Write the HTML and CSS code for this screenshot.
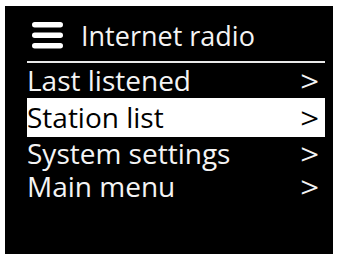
FILE: index.html
```html
<!DOCTYPE html>
<html>
<head>
<meta charset="utf-8">
<link rel="stylesheet" href="styles.css">
</head>
<body>
<div class="screen">
  <div class="header">
    <svg class="burger" width="32" height="28" viewBox="0 0 32 28">
      <rect x="0" y="0" width="31" height="5.5" rx="2.75" fill="#fff"/>
      <rect x="0" y="10.5" width="31" height="5.5" rx="2.75" fill="#fff"/>
      <rect x="0" y="21" width="31" height="5.5" rx="2.75" fill="#fff"/>
    </svg>
    <span class="title">Internet radio</span>
  </div>
  <div class="menu">
    <div class="row r1"><span>Last listened</span><span class="chev">&gt;</span></div>
    <div class="row r2 active"><span>Station list</span><span class="chev">&gt;</span></div>
    <div class="row r3"><span>System settings</span><span class="chev">&gt;</span></div>
    <div class="row r4"><span>Main menu</span><span class="chev">&gt;</span></div>
  </div>
</div>
</body>
</html>
```
FILE: styles.css
```css
html, body {
  margin: 0;
  padding: 0;
  background: #fff;
}
.screen {
  margin: 6px 0 0 5px;
  width: 328px;
  height: 248px;
  background: #000;
  box-sizing: border-box;
  padding: 0 8px 0 22px;
  font-family: "Open Sans", "DejaVu Sans", sans-serif;
  color: #f4f4f4;
}
.header {
  display: flex;
  align-items: center;
  border-bottom: 2px solid #e8e8e8;
  padding-left: 5px;
  box-sizing: border-box;
  height: 57px;
}
.burger {
  display: block;
  margin-top: 5px;
  margin-right: 17px;
}
.title {
  font-size: 27px;
  line-height: 30px;
  margin-top: 4px;
}
.menu {
  display: flex;
  flex-direction: column;
}
.row {
  display: flex;
  justify-content: space-between;
  align-items: flex-start;
  font-size: 28px;
  line-height: 33px;
  padding: 0 7px 0 0;
  white-space: nowrap;
  box-sizing: border-box;
}
.r1 { height: 35px; padding-top: 1px; }
.r2 { height: 39px; padding-top: 3px; }
.r3 { height: 33px; }
.r4 { height: 33px; }
.active {
  background: #fff;
  color: #000;
}
.chev {
  font-size: 30px;
  line-height: 33px;
  transform: scaleX(1.1);
}
```
